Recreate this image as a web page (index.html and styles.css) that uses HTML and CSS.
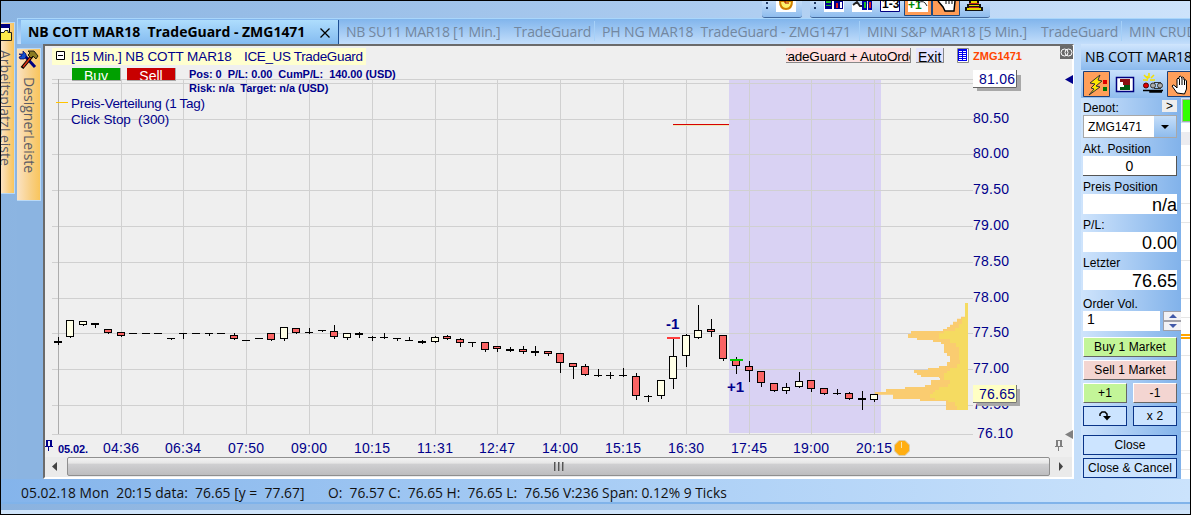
FILE: index.html
```
<!DOCTYPE html>
<html lang="de">
<head>
    <meta charset="UTF-8">
    <meta name="viewport" content="width=device-width, initial-scale=1.0">
    <title>NB COTT MAR18 TradeGuard</title>
    <link rel="stylesheet" href="styles.css">
    <script src="chart.js" defer></script>
</head>
<body>
    <div class="window">
        <!-- Top toolbars, cut off by the window edge -->
        <header class="toolbars">
            <div class="toolbar toolbar-clock">
                <svg width="40" height="17" viewBox="762 1 40 17">
                    <path class="grip" d="M766 2h2v2h-2zM766 7h2v2h-2z"/>
                    <path fill="#fff" d="M776 1h20v11h-20z"/>
                    <path d="M780 1q0 8 6 8t6-8z" fill="#fff36b" stroke="#d08000" stroke-width="2"/>
                    <path d="M785 1v2h4" fill="none" stroke="#a00000"/>
                </svg>
            </div>
            <div class="toolbar toolbar-tools">
                <svg width="180" height="17" viewBox="810 1 180 17">
                    <path class="grip" d="M814 2h2v2h-2zM814 7h2v2h-2z"/>
                    <path fill="#fff" d="M824 1h20v11h-20z"/>
                    <path fill="#00008b" d="M825 1h7v8h-7zM834 1h9v8h-9z"/>
                    <path fill="#20c020" d="M826 1h5v2h-5zM826 5h5v1h-5z"/>
                    <path fill="#e02020" d="M836 3h2v5h-2z"/>
                    <path fill="#fff" d="M840 2h2v6h-2z"/>
                    <path fill="#fff" d="M852 4h20v8h-20z"/>
                    <path d="M853 5l4-3 3 4h2" fill="none" stroke="#222" stroke-width="2"/>
                    <path fill="#0000a0" d="M862 1h5v9h-5zM868 1h4v9h-4z"/>
                    <path fill="#20c020" d="M864 2h2v6h-2z"/>
                    <path fill="#e02020" d="M869 2h2v6h-2z"/>
                    <path fill="#fff" stroke="#000080" d="M880.500 0v11.500h19V0"/>
                    <text x="882" y="8" class="icon-text">1-3</text>
                    <path fill="#ff9c56" stroke="#1c4a84" d="M904.500 0v15.500h27V0M932.500 0v15.500h27V0"/>
                    <path fill="#fff" d="M908 1h20v11h-20z"/>
                    <text x="908" y="9" class="icon-text icon-plus">+1</text>
                    <path d="M918 3q6-4 9 3" fill="none" stroke="#222"/>
                    <path d="M938 1l5 6 2 4h9l1-10" fill="#fff" stroke="#000" stroke-width="1.500"/>
                    <path d="M946 1v3M949 1v3M952 1v3" stroke="#000"/>
                    <path fill="#111" d="M969 1h10v3h2v3h2v4h-18V7h2V4h2z"/>
                    <path fill="#e8d400" d="M971 1h6v2h-6zM969 5h10v1h-10zM967 8h14v2h-14z"/>
                    <path fill="#c02020" d="M969 3h10v1h-10zM969 7h10v1h-10z"/>
                </svg>
            </div>
        </header>

        <div class="workspace">
            <!-- Docked bars on the left -->
            <aside class="dock dock-outer">
                <div class="dock-tab">
                    <svg width="12" height="19" viewBox="1 23 12 19">
                        <path fill="#fff" stroke="#000" d="M0 24.500h9.500v15H0z"/>
                        <path fill="#000080" d="M1 24h9v4H1z"/>
                        <path fill="#ffe94a" stroke="#222" stroke-width="1" d="M0 32.500h4l1-2h3v2h3.500v8H0z"/>
                    </svg>
                    <span>ArbeitsplatzLeiste</span>
                </div>
            </aside>

            <div class="desk">
                <nav class="tabs">
                    <div class="tab tab-active">
                        <span>NB COTT MAR18&nbsp; TradeGuard - ZMG1471</span>
                        <svg class="tab-close" width="10" height="10" viewBox="0 0 10 10"><path d="M.5.5l9 9M9.500.5l-9 9"/></svg>
                    </div>
                    <div class="tab tab-su"><span class="tab-symbol">NB SU11 MAR18 [1 Min.]</span><span>TradeGuard</span></div>
                    <div class="tab tab-ng"><span>PH NG MAR18&nbsp; TradeGuard - ZMG1471</span></div>
                    <div class="tab tab-sp"><span class="tab-symbol">MINI S&amp;P MAR18 [5 Min.]</span><span>TradeGuard</span></div>
                    <div class="tab tab-crude"><span>MIN CRUDE</span></div>
                </nav>

                <div class="content">
                    <aside class="dock dock-inner">
                        <div class="dock-tab">
                            <svg width="22" height="22" viewBox="18 50 22 22">
                                <path d="M24 56l11 12" stroke="#000080" stroke-width="3"/>
                                <path d="M32 57L22 69" stroke="#000" stroke-width="3.500"/>
                                <path d="M31 58l-8 10" stroke="#e03010" stroke-width="1.500"/>
                                <path fill="#1450d0" stroke="#000060" stroke-width=".7" d="M19 55h4v-3l3 3v3l-2 2h-4l-1-2 3-1z"/>
                                <path fill="#8a7a20" stroke="#000" stroke-width=".8" d="M28 52h6l4 5-2 3-3-3-2 2-3-3 2-2z"/>
                            </svg>
                            <span>DesignerLeiste</span>
                        </div>
                    </aside>

                    <main class="chart-window">
                        <div class="chart">
                            <svg class="plot" width="1029" height="411" viewBox="45 46 1029 411">
                                <rect class="session" x="729" y="79" width="152" height="354"/>
                                <g id="grid"></g>
                                <!-- Price distribution -->
                                <g transform="translate(860 290) scale(.33333)">
                                    <path fill="#facc70" d="M315 39V80H303V86H291V95H279V104H270V111H261V117H249V123H153V132H144V144H171V150H219V156H243V162H252V189H261V198H270V216H261V228H237V234H204V240H162V249H171V255H183V261H237V264H240V270H213V285H195V291H135V297H78V306H45V314H99V327H180V333H258V360H324V39Z"/>
                                    <path fill="#f5db61" d="M315 39V84H306V102H297V114H285V123H252V130H237V147H270V159H288V171H297V210H300V222H291V234H270V243H261V249H252V270H270V282H264V291H237V300H225V306H219V312H210V324H225V330H264V336H285V348H291V360H324V39Z"/>
                                </g>
                                <path d="M673 124.500h56" stroke="#d80000"/>
                                <path d="M673 125.500h56" stroke="#ece8b8"/>
                                <g id="candles"></g>
                                <path d="M667 338h13" stroke="#ff3c3c" stroke-width="2"/>
                                <path d="M730 360h13" stroke="#00c800" stroke-width="2"/>
                                <text class="trade" x="666" y="329">-1</text>
                                <text class="trade" x="727" y="392">+1</text>
                                <g id="axis"></g>

                                <!-- Price boxes -->
                                <path fill="#a8a8a8" d="M977 75h44v16h-44z"/>
                                <path fill="#fff" d="M973 70h44v18h-44z"/>
                                <path fill="none" stroke="#666" d="M973 87.500h43.500V70"/>
                                <text class="label" x="979" y="84" textLength="36">81.06</text>
                                <path fill="#a8a8a8" d="M977 389h43v17h-43z"/>
                                <path fill="#ffffc4" d="M973 385h44v18h-44z"/>
                                <path fill="none" stroke="#777" d="M973 402.500h43.500V385"/>
                                <text class="label" x="979" y="399" textLength="36">76.65</text>
                                <text class="label" x="977" y="438" textLength="36">76.10</text>

                                <path fill="#00008b" d="M1065 79.500l8-4.500v9z"/>
                                <path fill="#808080" d="M1065 434.500l8-4.500v9z"/>
                                <text class="date" x="58" y="453" textLength="30">05.02.</text>
                                <path fill="#00008b" d="M46 440h6v6h1v1h-4v4h-1v-4h-3v-1h1zM48 441v5h2v-5z" fill-rule="evenodd"/>
                                <path fill="#808080" d="M1056 440h6v6h1v1h-4v4h-1v-4h-3v-1h1zM1058 441v5h2v-5z" fill-rule="evenodd"/>
                                <path fill="#ffae12" stroke="#d8cdb0" d="M899 440.500h6l4.500 4.500v6l-4.500 4.500h-6l-4.500-4.500v-6z"/>
                                <path d="M901.500 442v6" stroke="#fbe3a8"/>
                                <path fill="#696969" d="M1060 46h13v13h-13z"/>
                                <g fill="none" stroke="#fff"><circle cx="1064.500" cy="52.500" r="3.500"/><circle cx="1068.500" cy="52.500" r="3.500"/></g>
                            </svg>

                            <div class="overlay">
                                <div class="chart-head">
                                    <div class="chart-title">
                                        <svg width="9" height="9" viewBox="0 0 9 9"><path d="M.5.5h8v8h-8zM2 4.500h5" fill="#fff" stroke="#000"/></svg>
                                        <span class="title-symbol">[15 Min.] NB COTT MAR18</span>
                                        <span class="title-market">ICE_US TradeGuard</span>
                                    </div>
                                    <div class="chart-actions">
                                        <span class="flat flat-auto">TradeGuard + AutoOrder</span>
                                        <span class="flat flat-exit">Exit</span>
                                        <svg width="12" height="15" viewBox="0 0 12 15"><path fill="#fff" stroke="#888" d="M.5.5h11v14H.5z"/><path fill="#0000f0" d="M1 1h9v12H1z"/><path d="M2 3.500h3m1 0h3M2 5.500h3m1 0h3M2 7.500h3m1 0h3M2 9.500h3m1 0h3M2 11.500h3m1 0h3" stroke="#fff"/></svg>
                                        <span class="account">ZMG1471</span>
                                    </div>
                                </div>
                                <div class="chart-orders">
                                    <button class="order order-buy">Buy</button>
                                    <button class="order order-sell">Sell</button>
                                    <div class="figures">
                                        <span class="pos">Pos: 0&nbsp; P/L: 0.00&nbsp; CumP/L:&nbsp; 140.00 (USD)</span>
                                        <span class="risk">Risk: n/a&nbsp; Target: n/a (USD)</span>
                                    </div>
                                </div>
                                <div class="legend">
                                    <span class="legend-dist">Preis-Verteilung (1 Tag)</span>
                                    <span class="legend-stop">Click Stop&nbsp; (300)</span>
                                </div>
                            </div>
                        </div>
                        <div class="scrollbar">
                            <svg width="22" height="19" viewBox="0 0 22 19"><path d="M12 5v9L7 9.500z" fill="#444"/></svg>
                            <div class="thumb"><i></i><i></i><i></i></div>
                            <svg width="22" height="19" viewBox="0 0 22 19"><path d="M9 5v9l4-4.500z" fill="#444"/></svg>
                        </div>
                    </main>

                    <!-- Order panel -->
                    <section class="panel">
                        <h2>NB COTT MAR18</h2>
                        <div class="panel-tools">
                            <svg width="108" height="28" viewBox="1082 70 108 28">
                                <path fill="#ff9f5a" stroke="#1c3f78" d="M1083.500 71.500h26v25h-26zM1167.500 71.500h26v25h-26z"/>
                                <path d="M1100 75l-10 8 5 1-4 4 3 1-5 6 11-8-4-1 6-5-4-1z" fill="#ffe800" stroke="#333"/>
                                <path fill="#e00000" d="M1103 80h4v4h-4z"/><path fill="#007800" d="M1103 87h4v4h-4z"/>
                                <path fill="#fff" stroke="#000080" stroke-width="1.500" d="M1116.500 77.500h17v14h-17z"/>
                                <path fill="#8b1010" d="M1120 79h10v3h-10zM1123 82h7v3h-7z"/>
                                <path fill="#005a10" d="M1120 90h10v-3h-10zM1124 85h6v2h-6z"/>
                                <path d="M1143 90.500h20M1150 91v1h12" stroke="#000" stroke-width="1.500"/>
                                <path d="M1154 82.500h7M1154 88.500h7" stroke="#333"/>
                                <circle cx="1146" cy="85.500" r="2.500" fill="#e00000" stroke="#500"/>
                                <circle cx="1153" cy="85.500" r="2.500" fill="#aaa" stroke="#333"/>
                                <circle cx="1160" cy="85.500" r="2.500" fill="#aaa" stroke="#333"/>
                                <path d="M1144 75l3 3M1149 73v5M1154 75l-3 3M1143 80h5M1150 80h5M1147 76l1 3" stroke="#f4e000" stroke-width="1.500"/>
                                <path d="M1177 93l-5-7q1-2 3 0l2 2v-9q1-2 2 0v-2q1-2 2.500 0v1q1-2 2.500 0v2q2-1 2.500 1v8l-2 5z" fill="#fff" stroke="#000"/>
                                <path d="M1179.500 79v6M1182 78v7M1184.500 80v5" stroke="#000"/>
                            </svg>
                        </div>
                        <div class="panel-body">
                            <form class="order-form">
                                <div class="depot-row"><label>Depot:</label><span class="more">&gt;</span></div>
                                <div class="depot"><span>ZMG1471</span><i><svg width="8" height="4" viewBox="0 0 8 4"><path d="M0 0h8L4 4z"/></svg></i></div>
                                <label class="lbl">Akt. Position</label>
                                <div class="field field-center">0</div>
                                <label class="lbl">Preis Position</label>
                                <div class="field">n/a</div>
                                <label class="lbl">P/L:</label>
                                <div class="field">0.00</div>
                                <label class="lbl">Letzter</label>
                                <div class="field">76.65</div>
                                <label class="lbl lbl-vol">Order Vol.</label>
                                <div class="volume">
                                    <div class="volume-value">1</div>
                                    <div class="spinner">
                                        <i><svg width="8" height="4" viewBox="0 0 8 4"><path d="M0 4h8L4 0z"/></svg></i>
                                        <i><svg width="8" height="4" viewBox="0 0 8 4"><path d="M0 0h8L4 4z"/></svg></i>
                                    </div>
                                </div>
                                <div class="buttons">
                                    <div class="btn buy wide">Buy 1 Market</div>
                                    <div class="btn sell wide">Sell 1 Market</div>
                                    <div class="btn buy">+1</div>
                                    <div class="btn sell">-1</div>
                                    <div class="btn blue"><svg width="12" height="10" viewBox="0 0 12 10"><path d="M1 5V3l2-2h3l2 2v4" fill="none" stroke="#000" stroke-width="1.500"/><path d="M4 5h8L8 9.500z"/></svg></div>
                                    <div class="btn blue">x 2</div>
                                    <div class="btn blue wide close">Close</div>
                                    <div class="btn blue wide">Close &amp; Cancel</div>
                                </div>
                            </form>
                            <svg class="ladder" width="9" height="381" viewBox="1181 98 9 381">
                                <path fill="#fff" d="M1181 98h9v381h-9z"/>
                                <path fill="#ccdff5" d="M1181 98h9v25h-9z"/>
                                <path fill="#3f0" stroke="#aaa" d="M1182.500 99.500h9v22h-9z"/>
                                <path fill="#ececf0" d="M1181 132h9v13h-9z"/>
                                <path d="M1181 165.500h9M1181 203.500h9M1181 222.500h9M1181 260.500h9M1181 298.500h9M1181 317.500h9M1181 355.500h9M1181 393.500h9M1181 412.500h9M1181 431.500h9M1181 450.500h9M1181 469.500h9" stroke="#e6e6e6"/>
                                <path d="M1181 335h9M1181 338h9" stroke="#ffa500" stroke-width="2"/>
                            </svg>
                        </div>
                    </section>
                </div>
            </div>
        </div>

        <footer class="status">
            <span class="status-cursor">05.02.18 Mon&nbsp; 20:15 data:&nbsp; 76.65 [y =&nbsp; 77.67]</span>
            <span class="status-bar">O:&nbsp; 76.57 C:&nbsp; 76.65 H:&nbsp; 76.65 L:&nbsp; 76.56 V:236 Span: 0.12% 9 Ticks</span>
        </footer>
        <div class="window-foot"></div>
    </div>
</body>
</html>
```
FILE: styles.css
```
* {
    box-sizing: border-box;
}

body {
    margin: 0;
    font-family: "Liberation Sans", Arial, sans-serif;
    font-size: 14px;
    color: #000;
    overflow: hidden;
}

svg {
    display: block;
    flex: none;
}

/* Window frame */
.window {
    width: 1191px;
    height: 515px;
    border: 1px solid #000;
    display: flex;
    flex-direction: column;
    overflow: hidden;
    background: linear-gradient(90deg, #8bb4e1, #acccf0 60%, #cde3fb);
}

/* Top toolbars */
.toolbars {
    height: 17px;
    display: flex;
    gap: 8px;
    padding-left: 761px;
    flex: none;
}

.toolbar {
    height: 17px;
    background: linear-gradient(#c3dcf8, #8fbdee);
    border-bottom: 1px solid #41689c;
    border-radius: 0 0 3px 3px;
    overflow: hidden;
}

.grip {
    fill: #203a66;
}

.icon-text {
    font-size: 12px;
    font-weight: bold;
}

.icon-plus {
    fill: #008a00;
}

.workspace {
    height: 461px;
    display: flex;
    flex: none;
}

/* Docked bars */
.dock-tab {
    display: flex;
    flex-direction: column;
    align-items: center;
    background: linear-gradient(90deg, #fbe3c4, #f8cf84 60%, #f9c55c);
    border: 1px solid #b9d9f7;
    border-left: none;
    color: #5c5c66;
    overflow: hidden;
}

.dock-tab span {
    writing-mode: vertical-rl;
    font-family: "Open Sans", sans-serif;
    font-size: 14px;
    line-height: 16px;
    white-space: nowrap;
}

.dock-outer {
    width: 16px;
    padding-top: 4px;
    flex: none;
}

.dock-outer .dock-tab {
    width: 14px;
    height: 172px;
    align-items: flex-start;
}

.dock-outer span {
    margin: 8px 0 0 -4px;
}

.dock-inner {
    width: 26px;
    padding-top: 4px;
    background: #8bb4e1;
    flex: none;
}

.dock-inner .dock-tab {
    width: 24px;
    height: 153px;
}

.dock-inner span {
    margin-top: 6px;
}

.desk {
    width: 1173px;
    flex: none;
    display: flex;
    flex-direction: column;
}

/* Chart tabs */
.tabs {
    height: 26px;
    display: flex;
    padding: 1px 0 0 3px;
    border-top: 1px solid #a9d6fb;
    border-left: 1px solid #a9d6fb;
    background: linear-gradient(#81b5ec, #c3defb);
    font-family: "Open Sans", sans-serif;
    font-size: 14px;
    overflow: hidden;
}

.tab {
    display: flex;
    flex: none;
    align-items: center;
    height: 20px;
    padding-left: 7px;
    border-right: 1px solid #a5d0f8;
    color: #73879f;
    white-space: nowrap;
    margin-top: 1px;
    letter-spacing: -.13px;
}

.tab-active {
    width: 318px;
    height: 24px;
    margin-top: 0;
    padding-bottom: 1px;
    border-right-color: #1d4f93;
    background: linear-gradient(#aeddfd, #84bbf0);
    color: #000;
    font-weight: bold;
    letter-spacing: -.02px;
}

.tab-close {
    margin: 2px 0 0 auto;
    margin-right: 8px;
    fill: none;
    stroke: #000;
    stroke-width: 1.300;
}

.tab-symbol {
    letter-spacing: -.24px;
    flex: none;
}

.tab-su {
    width: 256px;
}

.tab-su .tab-symbol {
    width: 168px;
}

.tab-ng {
    width: 265px;
}

.tab-sp {
    width: 262px;
}

.tab-sp .tab-symbol {
    width: 174px;
    letter-spacing: -.15px;
}

.content {
    display: flex;
    height: 435px;
}

/* Chart window */
.chart-window {
    width: 1031px;
    flex: none;
    border-top: 2px solid #6b6b6b;
    border-left: 2px solid #6b6b6b;
    border-bottom: 2px solid #fff;
    border-right: 2px solid #fff;
    background: #efefef;
}

.chart {
    display: grid;
    height: 411px;
    width: 1029px;
}

.plot,
.overlay {
    grid-area: 1 / 1;
}

.session {
    fill: #d9d2f3;
}

.grid-line {
    stroke: #d0d0d0;
}

.grid-start {
    stroke: #adadad;
}

.label {
    font-size: 14px;
    fill: #00008b;
}

.date {
    font-size: 11px;
    font-weight: bold;
    fill: #00008b;
}

.trade {
    font-size: 15px;
    font-weight: bold;
    fill: #00008b;
}

.overlay {
    color: #00008b;
    display: flex;
    flex-direction: column;
    align-items: flex-start;
    padding: 2px 0 0 7px;
    white-space: nowrap;
}

.chart-head {
    display: flex;
    align-items: flex-start;
    height: 20px;
}

.chart-title {
    display: flex;
    align-items: center;
    width: 314px;
    height: 17px;
    padding-left: 4px;
    background: #ffffcf;
    font-size: 13.500px;
    line-height: 16px;
}

.chart-title svg {
    margin: 0 6px 3px 0;
}

.title-symbol {
    width: 173px;
    flex: none;
    letter-spacing: -.12px;
}

.title-market {
    letter-spacing: -.35px;
}

.chart-actions {
    display: flex;
    margin-left: 420px;
}

.flat {
    height: 15px;
    line-height: 18px;
    color: #000;
    border-right: 1px solid #888;
    border-bottom: 1px solid #888;
    overflow: hidden;
}

.flat-auto {
    display: flex;
    justify-content: center;
    width: 125px;
    margin-right: 5px;
    background: #ffe1e1;
    font-size: 13.500px;
    letter-spacing: -.2px;
}

.flat-exit {
    width: 28px;
    padding-left: 2px;
    margin-right: 13px;
    background: #e4e4ff;
}

.account {
    margin-left: 4px;
    font-size: 11px;
    line-height: 17px;
    font-weight: bold;
    color: #ff4500;
}

.chart-orders {
    display: flex;
    padding-left: 20px;
    height: 28px;
}

.order {
    width: 49px;
    height: 13px;
    margin: 0 6px 0 0;
    padding: 0;
    border: none;
    border-right: 1px solid #aaa;
    border-bottom: 1px solid #aaa;
    color: #fff;
    font: 14px/16px "Liberation Sans", Arial, sans-serif;
    overflow: hidden;
}

.order-buy {
    background: #00a000;
}

.order-sell {
    background: #c80000;
}

.figures {
    display: flex;
    flex-direction: column;
    padding-left: 7px;
    margin-top: -1px;
    font-size: 11px;
    line-height: 14px;
    font-weight: bold;
    letter-spacing: -.06px;
}

.legend {
    display: flex;
    flex-direction: column;
    padding-left: 19px;
    font-size: 13.500px;
    line-height: 16px;
}

.legend-dist {
    letter-spacing: -.3px;
}

.legend-stop {
    letter-spacing: -.1px;
}

.legend-dist::before {
    content: "";
    display: inline-block;
    width: 12px;
    height: 1px;
    margin: 0 3px 5px -15px;
    background: #ffc400;
}

/* Horizontal scrollbar */
.scrollbar {
    display: flex;
    height: 20px;
    background: #eaeaea;
}

.thumb {
    flex: 1;
    display: flex;
    justify-content: center;
    align-items: center;
    gap: 2px;
    height: 19px;
    border: 1px solid #8f8f8f;
    border-radius: 2px;
    background: linear-gradient(#f3f3f3, #e5e5e5 32%, #d0d0d2 33%, #bdbdbf);
}

.thumb i {
    width: 2px;
    height: 9px;
    border-left: 1px solid #555;
    background: #999;
}

/* Order panel */
.panel {
    width: 116px;
    flex: none;
    border-left: 7px solid #c4defa;
    overflow: hidden;
}

.panel h2 {
    margin: 0;
    height: 26px;
    padding-left: 4px;
    font: 14px/25px "Open Sans", sans-serif;
    letter-spacing: -.1px;
    white-space: nowrap;
    background: linear-gradient(#cfe5fd, #8ab9ed);
}

.panel-tools {
    height: 28px;
    padding-left: 1px;
    background: linear-gradient(#c9e1fb, #8fbcee);
}

.panel-body {
    display: flex;
    height: 381px;
}

.order-form {
    width: 100px;
    flex: none;
    padding: 2px 4px 0 2px;
    background: linear-gradient(90deg, #cfe4fc, #81b2ea);
    font-size: 12px;
    letter-spacing: .1px;
}

.depot-row {
    display: flex;
    justify-content: space-between;
    height: 15px;
    line-height: 16px;
}

.depot-row label {
    height: 12px;
    overflow: hidden;
}

.more {
    width: 15px;
    height: 12px;
    line-height: 12px;
    text-align: center;
    background: #eee;
}

.depot {
    display: flex;
    height: 23px;
    padding-left: 4px;
    line-height: 22px;
    background: #fff;
    border: 1px solid #a8a8a8;
}

.depot i {
    width: 22px;
    margin-left: auto;
    display: flex;
    align-items: center;
    justify-content: center;
    background: linear-gradient(#c5def9, #8fbced);
}

.lbl {
    display: block;
    height: 18px;
    padding-top: 4px;
    line-height: 14px;
}

.field {
    height: 20px;
    background: #fff;
    font-size: 18px;
    line-height: 22px;
    text-align: right;
    letter-spacing: 0;
}

.field-center {
    font-size: 14px;
    line-height: 20px;
    text-align: center;
    border-right: 1px solid #555;
    border-bottom: 1px solid #555;
}

.lbl-vol {
    height: 21px;
    padding-top: 7px;
}

.volume {
    display: flex;
    gap: 3px;
    height: 26px;
}

.volume-value {
    width: 77px;
    flex: none;
    height: 20px;
    padding-left: 4px;
    font-size: 14px;
    line-height: 17px;
    background: #fff;
}

.spinner {
    flex: none;
    width: 18px;
}

.spinner i {
    display: flex;
    align-items: center;
    justify-content: center;
    height: 10px;
    background: #f2f2f5;
    border: 1px solid #a0a0a8;
    border-right: none;
}

.spinner path {
    fill: #4058a8;
}

.buttons {
    display: grid;
    grid-template-columns: 44px 44px;
    gap: 3px 6px;
}

.btn {
    display: flex;
    align-items: center;
    justify-content: center;
    height: 20px;
    border: 1px solid #fff;
    border-right-color: #666;
    border-bottom-color: #666;
    white-space: nowrap;
}

.wide {
    grid-column: 1 / 3;
}

.buy {
    background: #c3f598;
}

.sell {
    background: #f3d5d1;
}

.blue {
    background: #cce4ff;
    border-color: #0a3488;
}

.close {
    margin-top: 6px;
}

/* Status line */
.status {
    height: 25px;
    flex: none;
    display: flex;
    padding-left: 20px;
    border-bottom: 2px solid #80b3ea;
    background: linear-gradient(90deg, #84b4eb, #a8cdf5 50%, #cbe3fc);
    font-family: "Open Sans", sans-serif;
    font-size: 13.800px;
    line-height: 28px;
    white-space: nowrap;
    color: #111;
}

.status-cursor {
    width: 307px;
    letter-spacing: .05px;
}

.window-foot {
    height: 10px;
    flex: none;
    border-bottom: 4px solid #cfe4fa;
    background: linear-gradient(90deg, #8ab2df, #c4dcf6);
}
```
FILE: chart.js
```
const SVG_NS = 'http://www.w3.org/2000/svg';

// x, high, body top, body bottom, low, fill
// w = rising, r = falling, d = doji
const CANDLES = [
    [58, 337, 341, 343, 345, 'd'], [70, 320, 320, 337, 338, 'w'], [83, 321, 321, 325, 326, 'w'],
    [95, 323, 323, 325, 328, 'd'], [108, 329, 329, 333, 334, 'r'], [121, 332, 332, 336, 337, 'r'],
    [133, 333, 333, 334, 334, 'd'], [146, 333, 333, 334, 334, 'd'], [158, 333, 333, 334, 334, 'd'],
    [171, 338, 338, 339, 340, 'd'], [183, 333, 333, 334, 339, 'd'], [196, 333, 333, 334, 334, 'd'],
    [209, 333, 333, 334, 336, 'd'], [221, 333, 333, 334, 334, 'd'], [234, 333, 335, 339, 340, 'r'],
    [246, 340, 340, 341, 341, 'd'], [259, 338, 338, 339, 339, 'd'], [271, 333, 333, 340, 341, 'r'],
    [284, 327, 327, 339, 341, 'w'], [296, 328, 328, 333, 334, 'r'], [309, 328, 332, 333, 334, 'd'],
    [322, 330, 330, 331, 332, 'd'], [334, 325, 331, 337, 339, 'r'], [347, 333, 333, 338, 340, 'w'],
    [359, 332, 333, 335, 338, 'd'], [372, 336, 337, 338, 341, 'd'], [384, 333, 337, 338, 339, 'd'],
    [397, 338, 338, 339, 341, 'd'], [409, 337, 340, 341, 341, 'd'], [422, 340, 341, 343, 344, 'd'],
    [435, 336, 337, 342, 343, 'w'], [447, 335, 336, 339, 340, 'r'], [460, 338, 339, 343, 347, 'r'],
    [472, 342, 342, 343, 347, 'd'], [485, 342, 342, 350, 352, 'r'], [497, 346, 346, 349, 352, 'r'],
    [510, 347, 349, 351, 352, 'd'], [523, 346, 349, 352, 354, 'r'], [535, 346, 351, 353, 356, 'd'],
    [548, 351, 351, 354, 356, 'r'], [560, 353, 353, 363, 373, 'r'], [573, 363, 363, 367, 379, 'r'],
    [585, 364, 366, 375, 376, 'r'], [598, 369, 375, 376, 377, 'd'], [610, 372, 375, 376, 379, 'd'],
    [623, 368, 375, 376, 377, 'd'], [636, 373, 376, 396, 400, 'r'], [648, 395, 396, 397, 402, 'd'],
    [661, 380, 380, 396, 399, 'w'], [673, 338, 356, 379, 389, 'w'], [686, 334, 335, 356, 367, 'w'],
    [698, 305, 330, 338, 339, 'w'], [711, 319, 329, 332, 337, 'r'], [723, 335, 335, 359, 361, 'r'],
    [736, 357, 360, 366, 374, 'r'], [749, 361, 366, 371, 382, 'r'], [761, 371, 371, 383, 387, 'r'],
    [774, 383, 383, 391, 392, 'r'], [786, 383, 387, 391, 394, 'w'], [799, 372, 381, 387, 388, 'w'],
    [811, 380, 380, 389, 392, 'r'], [824, 388, 388, 394, 395, 'r'], [837, 389, 393, 394, 395, 'd'],
    [849, 392, 393, 399, 400, 'r'], [862, 391, 398, 400, 410, 'd'], [874, 394, 394, 400, 402, 'w']
];

const FILLS = { w: '#ffffe6', r: '#fa6464', d: '#000' };

// x position of each time line
const TIMES = {
    '04:36': 121, '06:34': 183, '07:50': 246, '09:00': 309, '10:15': 372, '11:31': 435, '12:47': 497,
    '14:00': 560, '15:15': 623, '16:30': 686, '17:45': 749, '19:00': 811, '20:15': 874
};

// y position of each price line
const PRICES = {
    '80.50': 119, '80.00': 154, '79.50': 190, '79.00': 226, '78.50': 262,
    '78.00': 298, '77.50': 333, '77.00': 369, '76.50': 405
};

function add(parent, name, attrs, text) {
    const el = document.createElementNS(SVG_NS, name);
    Object.entries(attrs).forEach(([key, value]) => el.setAttribute(key, value));
    if (text) el.textContent = text;
    parent.appendChild(el);
}

const grid = document.getElementById('grid');
const axis = document.getElementById('axis');
const candles = document.getElementById('candles');

[79, 83, ...Object.values(PRICES), 434].forEach(y => {
    add(grid, 'path', { d: `M52 ${y + 0.5}H973`, class: 'grid-line' });
});
Object.values(TIMES).forEach(x => {
    add(grid, 'path', { d: `M${x + 0.5} 79V434`, class: 'grid-line' });
});
add(grid, 'path', { d: 'M58.5 79V434', class: 'grid-start' });

Object.entries(PRICES).forEach(([label, y]) => {
    add(axis, 'text', { x: 973, y: y + 4, class: 'label', textLength: 36 }, label);
});
Object.entries(TIMES).forEach(([label, x]) => {
    add(axis, 'text', { x: x, y: 453, class: 'label', 'text-anchor': 'middle', textLength: 36 }, label);
});

CANDLES.forEach(([x, high, top, bottom, low, type]) => {
    add(candles, 'rect', { x: x, y: high, width: 1, height: low - high });
    if (type === 'd') {
        add(candles, 'rect', { x: x - 4, y: top, width: 8, height: bottom - top });
    } else {
        add(candles, 'rect', {
            x: x - 3.5, y: top + 0.5, width: 7, height: bottom - top - 1,
            fill: FILLS[type], stroke: '#000'
        });
    }
});
```
